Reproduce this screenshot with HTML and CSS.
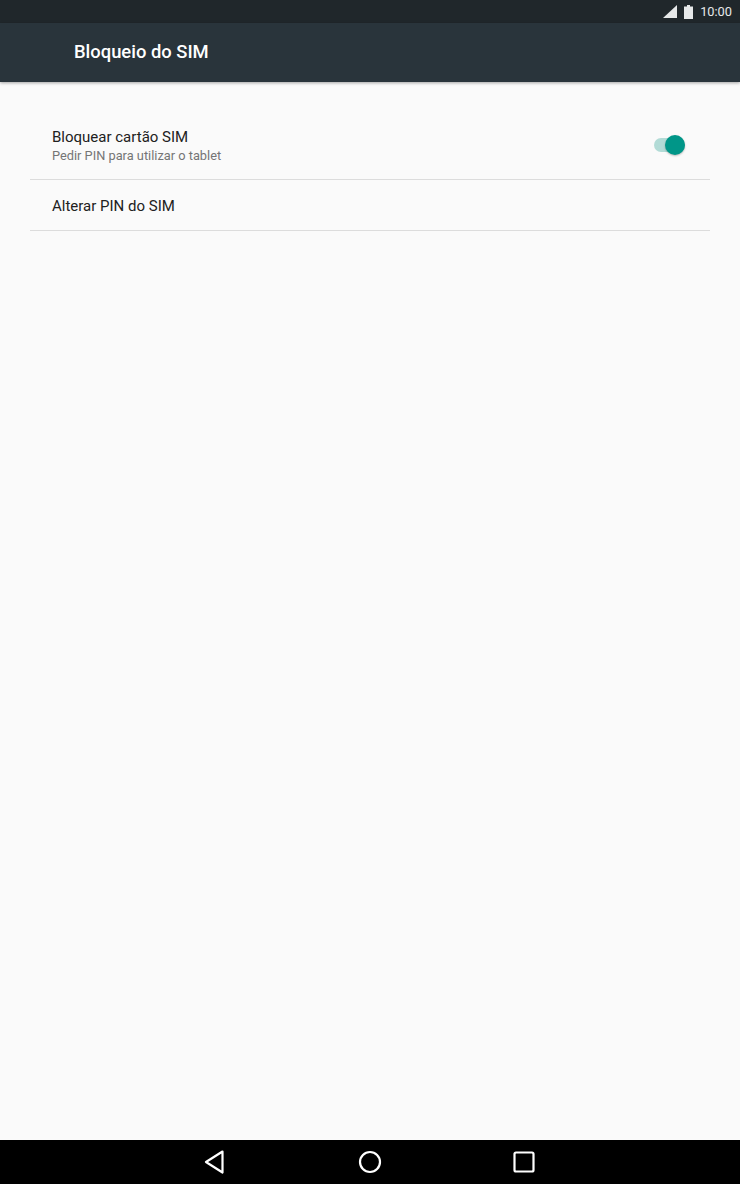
FILE: index.html
```html
<!DOCTYPE html>
<html lang="pt">
<head>
    <meta charset="UTF-8">
    <meta name="viewport" content="width=device-width, initial-scale=1.0">
    <title>Bloqueio do SIM</title>
    <link rel="stylesheet" href="styles.css">
</head>
<body>
    <!-- Status bar -->
    <div class="status-bar">
        <svg class="signal-icon" width="14" height="14" viewBox="0 0 14 14"><polygon points="0,13 14,0 14,13" fill="#e6e8e9"/></svg>
        <svg class="battery-icon" width="9" height="14" viewBox="0 0 9 14"><path d="M3 0h3v1.500h3V14H0V1.500h3z" fill="#e6e8e9"/></svg>
        <span class="clock">10:00</span>
    </div>

    <header class="app-bar">
        <h1>Bloqueio do SIM</h1>
    </header>

    <main class="settings">
        <div class="row row-toggle">
            <div class="row-text">
                <div class="row-title">Bloquear cartão SIM</div>
                <div class="row-summary">Pedir PIN para utilizar o tablet</div>
            </div>
            <div class="switch"><span class="switch-thumb"></span></div>
        </div>
        <div class="row row-plain">
            <div class="row-title">Alterar PIN do SIM</div>
        </div>
    </main>

    <!-- Navigation bar -->
    <nav class="nav-bar">
        <svg width="22" height="24" viewBox="0 0 22 24"><path d="M18.500 1.500 L2 12 L18.500 22.500 Z" fill="none" stroke="#fff" stroke-width="2.200" stroke-linejoin="round"/></svg>
        <svg width="24" height="24" viewBox="0 0 24 24"><circle cx="12" cy="12" r="10" fill="none" stroke="#fff" stroke-width="2.200"/></svg>
        <svg width="22" height="22" viewBox="0 0 22 22"><rect x="1.500" y="1.500" width="19" height="19" rx="1.500" fill="none" stroke="#fff" stroke-width="2.200"/></svg>
    </nav>
</body>
</html>
```

FILE: styles.css
```css
* {
    box-sizing: border-box;
}

html, body {
    height: 100%;
}

body {
    margin: 0;
    font-family: Roboto, sans-serif;
    background-color: #fafafa;
    display: flex;
    flex-direction: column;
}

.status-bar {
    height: 23px;
    background-color: #20272b;
    color: #e6e8e9;
    display: flex;
    align-items: center;
    justify-content: flex-end;
    padding-right: 8px;
}

.signal-icon {
    margin-right: 7px;
}

.battery-icon {
    margin-right: 7px;
}

.clock {
    font-size: 12.800px;
}

.app-bar {
    height: 59px;
    background-color: #29343b;
    display: flex;
    align-items: center;
    padding-left: 74px;
    padding-bottom: 2px;
    box-shadow: 0 1px 3px rgba(0, 0, 0, 0.35);
}

.app-bar h1 {
    margin: 0;
    color: #fff;
    font-size: 18.400px;
    font-weight: 500;
}

.settings {
    flex: 1;
    padding: 16px 30px 0;
}

.row {
    border-bottom: 1px solid #dcdcdc;
    padding-left: 22px;
}

.row-toggle {
    height: 82px;
    display: flex;
    align-items: center;
    justify-content: space-between;
    padding-top: 13px;
    padding-right: 25px;
}

.row-plain {
    height: 51px;
    display: flex;
    align-items: center;
    padding-top: 1px;
}

.row-title {
    font-size: 15px;
    color: #212121;
}

.row-summary {
    font-size: 12.800px;
    color: #757575;
    margin-top: 2px;
}

.switch {
    position: relative;
    width: 31px;
    height: 14px;
    border-radius: 7px;
    background-color: #b2dbd6;
}

.switch-thumb {
    position: absolute;
    top: -3px;
    right: 0;
    width: 20px;
    height: 20px;
    border-radius: 50%;
    background-color: #009688;
    box-shadow: 0 1px 2px rgba(0, 0, 0, 0.25);
}

.nav-bar {
    height: 44px;
    background-color: #000;
    display: grid;
    grid-template-columns: 22px 24px 22px;
    justify-content: center;
    column-gap: 132px;
    align-items: center;
}

.nav-bar svg:last-child {
    margin-left: -1px;
}
```
